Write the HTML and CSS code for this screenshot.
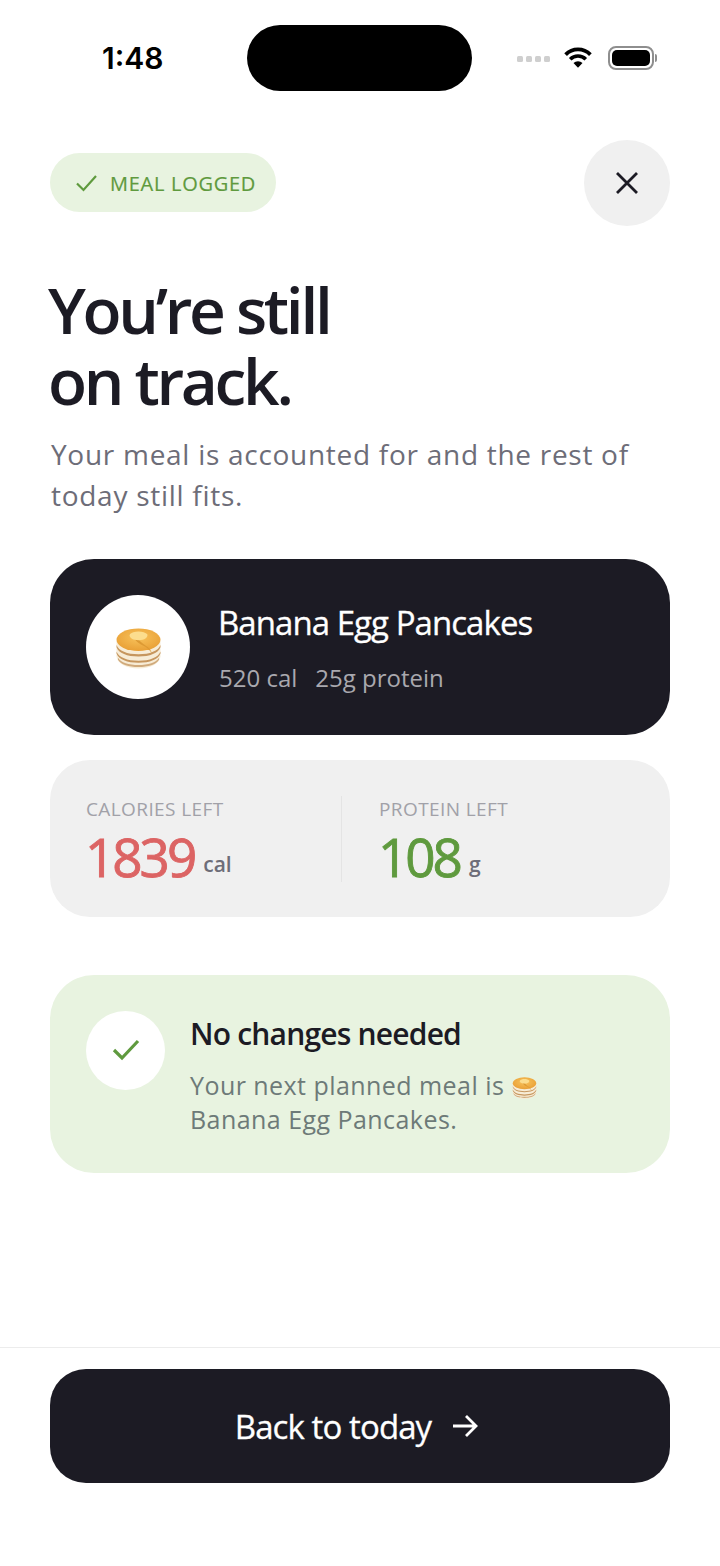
FILE: index.html
```html
<!DOCTYPE html>
<html lang="en">
<head>
    <meta charset="UTF-8">
    <meta name="viewport" content="width=device-width, initial-scale=1.0">
    <title>Meal logged</title>
    <link rel="stylesheet" href="styles.css">
</head>
<body>
    <svg class="defs" width="0" height="0" aria-hidden="true">
        <defs>
            <radialGradient id="pancake-top" cx="0.5" cy="0.4" r="0.6">
                <stop offset="0" stop-color="#f8c35c"/>
                <stop offset="1" stop-color="#e9a036"/>
            </radialGradient>
        </defs>
        <symbol id="pancakes" viewBox="0 0 48 42">
            <path d="M1.500 13v16c0 7 10 12.500 22.500 12.500s22.500-5.500 22.500-12.500V13z" fill="#f7ecd6"/>
            <path d="M1.500 17.500c2 6 11 9.500 22.500 9.500s20.500-3.500 22.500-9.500v2.200c-2 6-11 9.500-22.500 9.500s-20.500-3.500-22.500-9.500z" fill="#c6965e"/>
            <path d="M1.500 24c2 6 11 9.500 22.500 9.500s20.500-3.500 22.500-9.500v2.200c-2 6-11 9.500-22.500 9.500s-20.500-3.500-22.500-9.500z" fill="#c6965e"/>
            <path d="M3 30.500c3 5 11 7.500 21 7.500s18-2.500 21-7.500v2c-3 5-11 7.500-21 7.500S6 37.500 3 32.500z" fill="#d0aa7c"/>
            <ellipse cx="24" cy="12" rx="22.500" ry="11.500" fill="url(#pancake-top)"/>
            <path d="M14 6c6 1 10 6.500 15 10.500 4 3 7 4 9 10 0 0-3.500-6-9.500-8.500C23 16 19 10 14 6z" fill="#dd9a34"/>
            <path d="M15 6.500c3-4 15-4 18 0 1 3.500-3 6-9 6s-10-2.500-9-6z" fill="#fcdd8e"/>
        </symbol>
    </svg>

    <div class="screen">
        <header class="status-bar">
            <span class="time">1:48</span>
            <div class="island"></div>
            <div class="status-icons">
                <div class="signal"><i></i><i></i><i></i><i></i></div>
                <svg class="wifi" width="30" height="22" viewBox="0 0 30 22">
                    <path d="M2.600 8.600A17.500 17.500 0 0 1 27.400 8.600" fill="none" stroke="#000" stroke-width="3.800"/>
                    <path d="M7.200 13.200A11 11 0 0 1 22.800 13.200" fill="none" stroke="#000" stroke-width="3.600"/>
                    <path d="M15 21.800L10.500 17A6.400 6.400 0 0 1 19.500 17z"/>
                </svg>
                <div class="battery"><div class="battery-fill"></div></div>
                <div class="battery-cap"></div>
            </div>
        </header>

        <main class="content">
            <div class="top-row">
                <div class="logged-pill">
                    <svg width="24" height="20" viewBox="0 0 24 20"><path d="M2 10.500l6.500 6.500L21 3" fill="none" stroke="#5f9a3e" stroke-width="2.200"/></svg>
                    <span>MEAL LOGGED</span>
                </div>
                <button class="close-btn">
                    <svg width="26" height="26" viewBox="0 0 26 26"><path d="M3 3l20 20M23 3L3 23" fill="none" stroke="#1c1b24" stroke-width="2.800"/></svg>
                </button>
            </div>

            <h1>You’re still<br>on track.</h1>
            <p class="subtitle">Your meal is accounted for and the rest of today still fits.</p>

            <section class="meal-card">
                <div class="meal-avatar"><svg class="meal-food" width="47" height="41"><use href="#pancakes"/></svg></div>
                <div class="meal-text">
                    <div class="meal-name">Banana Egg Pancakes</div>
                    <div class="meal-info"><span>520 cal</span><span>25g protein</span></div>
                </div>
            </section>

            <section class="stats-card">
                <div class="stat stat-calories">
                    <div class="stat-label">CALORIES LEFT</div>
                    <div class="stat-value"><span class="num red">1839</span><span class="unit">cal</span></div>
                </div>
                <div class="stat stat-protein">
                    <div class="stat-label">PROTEIN LEFT</div>
                    <div class="stat-value"><span class="num green">108</span><span class="unit">g</span></div>
                </div>
            </section>

            <section class="note-card">
                <div class="note-check">
                    <svg width="30" height="24" viewBox="0 0 30 24"><path d="M3 13l8 8L27 4" fill="none" stroke="#5f9a3e" stroke-width="3.200"/></svg>
                </div>
                <div>
                    <div class="note-title">No changes needed</div>
                    <p class="note-text">Your next planned meal is <svg class="inline-food" width="25" height="22"><use href="#pancakes"/></svg><br>Banana Egg Pancakes.</p>
                </div>
            </section>
        </main>

        <footer class="footer">
            <button class="back-btn">
                <span>Back to today</span>
                <svg width="28" height="26" viewBox="0 0 28 26"><path d="M2 13h23M15 3l10 10-10 10" fill="none" stroke="#fff" stroke-width="2.800"/></svg>
            </button>
        </footer>
    </div>
</body>
</html>
```

FILE: styles.css
```css
* {
    box-sizing: border-box;
}
body {
    font-family: 'Open Sans', sans-serif;
    background-color: #fff;
    color: #1c1b24;
    margin: 0;
    padding: 0;
}
.defs {
    display: block;
    height: 0;
}
.screen {
    width: 720px;
    height: 1566px;
    display: flex;
    flex-direction: column;
}
.status-bar {
    height: 140px;
    flex: none;
    display: flex;
    padding: 25px 0 0 102px;
    align-items: flex-start;
}
.time {
    font-family: 'Inter', sans-serif;
    font-size: 30px;
    font-weight: 600;
    color: #000;
    width: 145px;
    line-height: 66px;
}
.island {
    width: 225px;
    height: 66px;
    border-radius: 33px;
    background-color: #000;
}
.status-icons {
    display: flex;
    align-items: center;
    height: 66px;
    margin-left: 45px;
}
.signal {
    display: flex;
    gap: 3px;
    margin-top: 1px;
}
.signal i {
    width: 6px;
    height: 6px;
    border-radius: 1.500px;
    background-color: #cfcfcf;
}
.wifi {
    margin: -2px 0 0 13px;
}
.battery {
    width: 46px;
    height: 24px;
    margin-left: 15px;
    border: 2px solid #8e8e8e;
    border-radius: 8px;
    padding: 2px;
}
.battery-fill {
    width: 100%;
    height: 100%;
    background-color: #000;
    border-radius: 5px;
}
.battery-cap {
    width: 2px;
    height: 8px;
    margin-left: 1px;
    background-color: #8e8e8e;
    border-radius: 0 2px 2px 0;
}
.content {
    flex: 1;
    padding: 0 50px;
}
.top-row {
    display: flex;
    justify-content: space-between;
    align-items: center;
}
.logged-pill {
    width: 226px;
    height: 59px;
    margin-top: -1px;
    border-radius: 30px;
    background-color: #e8f3e0;
    display: flex;
    align-items: center;
    gap: 11px;
    padding-left: 25px;
    color: #5f9a3e;
    font-size: 20px;
    font-weight: 500;
    letter-spacing: 0.72px;
    -webkit-text-stroke: 0.2px #5f9a3e;
}
.logged-pill span {
    padding-top: 2px;
}
.close-btn {
    width: 86px;
    height: 86px;
    border: none;
    border-radius: 50%;
    background-color: #f0f0f0;
    display: flex;
    align-items: center;
    justify-content: center;
    padding: 0;
}
h1 {
    margin: 48px 0 0 -2px;
    font-size: 64px;
    line-height: 71px;
    font-weight: 600;
    letter-spacing: -3.3px;
    color: #1c1b24;
}
.subtitle {
    margin: 18px 0 0;
    font-size: 28px;
    line-height: 41px;
    letter-spacing: 0.72px;
    color: #6d6d78;
    padding-left: 1px;
}
.meal-card {
    margin-top: 43px;
    height: 176px;
    border-radius: 44px;
    background-color: #1c1b24;
    display: flex;
    align-items: center;
    gap: 28px;
    padding-left: 36px;
}
.meal-avatar {
    width: 104px;
    height: 104px;
    border-radius: 50%;
    background-color: #fff;
    display: flex;
    align-items: center;
    justify-content: center;
}
.meal-food {
    margin-top: 2px;
}
.meal-text {
    padding-top: 2px;
}
.meal-name {
    font-size: 33px;
    line-height: 42px;
    font-weight: 500;
    letter-spacing: -0.95px;
    color: #fff;
    -webkit-text-stroke: 0.3px #fff;
}
.meal-info {
    display: flex;
    gap: 18px;
    margin-top: 17px;
    padding-left: 1px;
    font-size: 24px;
    line-height: 34px;
    color: #a9a8ae;
}
.stats-card {
    margin-top: 25px;
    height: 157px;
    border-radius: 40px;
    background-color: #f0f0f0;
    display: flex;
    align-items: center;
    padding-left: 36px;
}
.stat {
    height: 86px;
}
.stat-calories {
    width: 256px;
    border-right: 1px solid #e4e4e4;
}
.stat-protein {
    padding-left: 37px;
}
.stat-label {
    font-size: 19px;
    line-height: 26px;
    letter-spacing: 0.4px;
    color: #a1a1a8;
}
.stat-value {
    line-height: 56px;
    margin-top: 7px;
    margin-left: -1px;
    white-space: nowrap;
}
.num {
    font-size: 53px;
    font-weight: 500;
    letter-spacing: -3px;
}
.red {
    color: #dc6464;
    -webkit-text-stroke: 0.9px #dc6464;
}
.green {
    color: #5f9a3e;
    -webkit-text-stroke: 0.9px #5f9a3e;
}
.unit {
    font-size: 21px;
    font-weight: 600;
    color: #6d6d78;
    margin-left: 9px;
    vertical-align: 5px;
}
.note-card {
    margin-top: 58px;
    height: 198px;
    border-radius: 44px;
    background-color: #e8f3e0;
    display: flex;
    gap: 25px;
    padding: 36px 36px 0;
}
.note-check {
    width: 79px;
    height: 79px;
    flex: none;
    border-radius: 50%;
    background-color: #fff;
    display: flex;
    align-items: center;
    justify-content: center;
    padding-bottom: 4px;
}
.note-title {
    font-size: 30px;
    line-height: 46px;
    font-weight: 600;
    letter-spacing: -0.8px;
    color: #1c1b24;
}
.note-text {
    margin: 11px 0 0;
    font-size: 25px;
    line-height: 34px;
    letter-spacing: 0.45px;
    color: #6d7a78;
}
.inline-food {
    vertical-align: -4px;
    margin-left: 1px;
}
.footer {
    flex: none;
    height: 219px;
    border-top: 1px solid #ececec;
    padding: 21px 50px 0;
}
.back-btn {
    width: 100%;
    height: 114px;
    border: none;
    border-radius: 36px;
    background-color: #1c1b24;
    color: #fff;
    font-family: 'Open Sans', sans-serif;
    font-size: 33px;
    font-weight: 500;
    letter-spacing: -0.9px;
    -webkit-text-stroke: 0.3px #fff;
    display: flex;
    align-items: center;
    justify-content: center;
    gap: 20px;
    padding: 0 6px 0 0;
}
```
